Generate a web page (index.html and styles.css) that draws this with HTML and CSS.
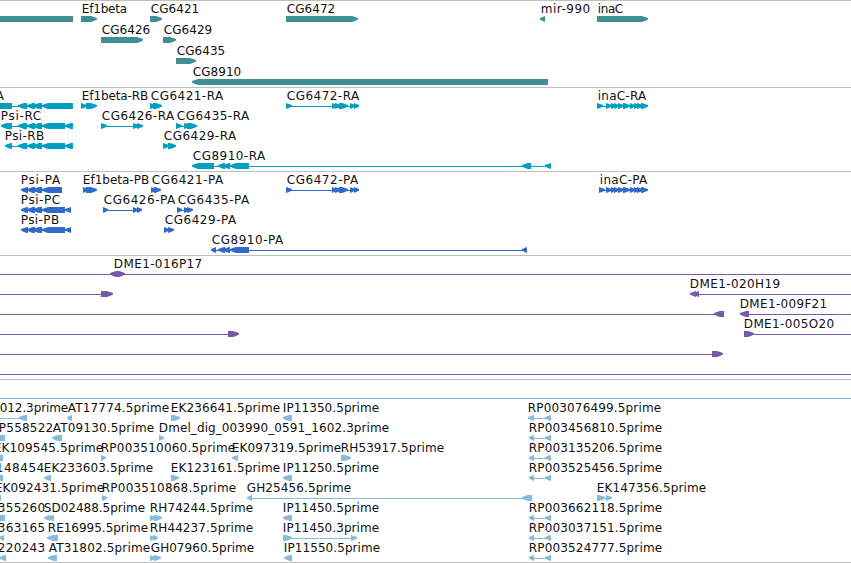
FILE: index.html
```html
<!DOCTYPE html>
<html lang="en">
<head>
    <meta charset="UTF-8">
    <meta name="viewport" content="width=device-width, initial-scale=1.0">
    <title>Genome browser</title>
    <link rel="stylesheet" href="styles.css">
</head>
<body>
    <main class="browser" id="browser"></main>
    <script src="tracks.js"></script>
</body>
</html>
```
FILE: styles.css
```css
body {
  margin: 0;
  background-color: #fff;
  overflow: hidden;
}

.browser {
  display: flex;
  flex-direction: column;
  height: 563px;
  box-sizing: border-box;
  border-bottom: 1px solid #bfbfbf;
}

.track {
  display: flex;
  flex-direction: column;
  flex-shrink: 0;
  box-sizing: border-box;
  border-top: 1px solid #bfbfbf;
  padding-bottom: 3px;
}

.row {
  display: block;
  width: 100%;
  height: 20px;
  flex-shrink: 0;
  overflow: visible;
}

.genes .row {
  height: 21px;
}

.genes {
  padding-bottom: 2px;
  color: #3f8f95;
}

.transcripts {
  color: #009fbf;
}

.proteins {
  color: #306acb;
}

.clones {
  color: #7759a8;
}

.ests {
  color: #87bbdd;
  padding-bottom: 2px;
}

.shape {
  fill: currentColor;
}

.label {
  font-family: "DejaVu Sans", sans-serif;
  font-size: 12px;
  fill: #111;
}
```
FILE: tracks.js
```js
// feature: [label, label start, label end, strand, spans, line start, line end]
const psi = [[18, 27], [27, 35], [33, 42], [42, 65], [65, 73]];
const psiProtein = [[21, 28], [27, 35], [33, 42], [42, 65], [65, 71]];
const cg6472 = [[286, 292], [332, 337], [335, 341], [339, 348], [350, 355], [354, 359]];
const inaC = [[606, 612], [611, 616], [614, 619], [618, 624], [623, 630], [630, 635], [634, 639], [637, 643], [641, 648]];
const rpPair = [[529, 534], [545, 551]];

const tracks = [
    { name: "genes", rows: [
        [["", 0, 0, "<", [[-10, 73]]],
         ["Ef1beta", 81, 127, ">", [[81, 97]]],
         ["CG6421", 150, 199, ">", [[150, 162]]],
         ["CG6472", 286, 335, ">", [[286, 358]]],
         ["mir-990", 540, 590, "<", [[540, 545]]],
         ["inaC", 597, 623, ">", [[597, 648]]]],
        [["CG6426", 101, 150, ">", [[101, 143]]],
         ["CG6429", 163, 212, ">", [[163, 176]]]],
        [["CG6435", 176, 225, ">", [[176, 196]]]],
        [["CG8910", 192, 241, "<", [[192, 548]]]]
    ] },
    { name: "transcripts", rows: [
        [["A", -5, 4, "<", [[-10, 12], [18, 27], [27, 35], [33, 42], [42, 73]]],
         ["Ef1beta-RB", 81, 148, ">", [[81, 87], [86, 97]]],
         ["CG6421-RA", 150, 223, ">", [[150, 156], [153, 162]]],
         ["CG6472-RA", 286, 359, ">", cg6472],
         ["inaC-RA", 597, 646, ">", [[597, 603], ...inaC]]],
        [["Psi-RC", 0, 41, "<", [[1, 12], ...psi]],
         ["CG6426-RA", 101, 174, ">", [[101, 107], [133, 139], [137, 143]]],
         ["CG6435-RA", 176, 249, ">", [[176, 182], [184, 190], [187, 197]]]],
        [["Psi-RB", 4, 44, "<", [[5, 12], ...psi]],
         ["CG6429-RA", 163, 236, ">", [[163, 169], [168, 176]]]],
        [["CG8910-RA", 192, 265, "<", [[192, 214], [218, 225], [223, 230], [230, 249], [522, 531], [545, 551]]]]
    ] },
    { name: "proteins", rows: [
        [["Psi-PA", 20, 60, "<", [[21, 28], [27, 35], [33, 42], [42, 62]]],
         ["Ef1beta-PB", 82, 149, ">", [[83, 88], [86, 97]]],
         ["CG6421-PA", 151, 223, ">", [[151, 156], [154, 161]]],
         ["CG6472-PA", 286, 358, ">", cg6472],
         ["inaC-PA", 599, 647, ">", [[599, 605], ...inaC]]],
        [["Psi-PC", 20, 60, "<", psiProtein],
         ["CG6426-PA", 103, 175, ">", [[103, 108], [133, 138], [137, 142]]],
         ["CG6435-PA", 177, 249, ">", [[177, 182], [184, 189], [187, 193]]]],
        [["Psi-PB", 20, 59, "<", psiProtein],
         ["CG6429-PA", 164, 236, ">", [[164, 169], [168, 174]]]],
        [["CG8910-PA", 211, 283, "<", [[211, 216], [218, 225], [223, 230], [230, 249], [522, 527]]]]
    ] },
    { name: "clones", rows: [
        [["DME1-016P17", 113, 202, "<", [[110, 117]], 0, 851],
         ["", 0, 0, ">", [[116, 125]]]],
        [["", 0, 0, ">", [[101, 113]], 0, 101],
         ["DME1-020H19", 689, 780, "<", [[690, 696], [693, 699]], 693, 851]],
        [["", 0, 0, "<", [[714, 724]], 0, 720],
         ["DME1-009F21", 739, 827, "<", [[740, 749]], 742, 851]],
        [["", 0, 0, ">", [[228, 239]], 0, 230],
         ["DME1-005O20", 743, 834, ">", [[744, 754]], 744, 851]],
        [["", 0, 0, ">", [[712, 723]], 0, 715]],
        [["", 0, 0, ">", [], 0, 851]]
    ] },
    { name: "ests", rows: [
        [["", 0, 0, ">", [], 0, 851]],
        [["012.3prime", -1, 68, "<", [[19, 27]], 0, 20],
         ["AT17774.5prime", 67, 169, "<", [[67, 72]]],
         ["EK236641.5prime", 170, 280, ">", [[171, 180]]],
         ["IP11350.5prime", 282, 379, "<", [[283, 292]]],
         ["RP003076499.5prime", 527, 661, "<", [[528, 534], [545, 551]]]],
        [["P558522", -2, 53, "<", [[-8, 5]]],
         ["AT09130.5prime", 52, 154, "<", [[52, 62]]],
         ["Dmel_dig_003990_0591_1602.3prime", 158, 389, ">", [[159, 164]]],
         ["RP003456810.5prime", 528, 662, "<", rpPair]],
        [["EK109545.5prime", -7, 103, "<", [[-8, 3]]],
         ["RP003510060.5prime", 100, 235, ">", [[101, 106]]],
         ["EK097319.5prime", 231, 341, "<", [[232, 238]]],
         ["RH53917.5prime", 340, 444, ">", [[341, 351]]],
         ["RP003135206.5prime", 528, 662, "<", rpPair]],
        [["148454", -5, 44, "<", [[-8, 3]]],
         ["EK233603.5prime", 43, 153, "<", [[44, 51]]],
         ["EK123161.5prime", 170, 280, ">", [[171, 179]]],
         ["IP11250.5prime", 282, 379, "<", [[283, 292]]],
         ["RP003525456.5prime", 528, 662, "<", rpPair]],
        [["EK092431.5prime", -6, 104, "<", [[-8, 1]]],
         ["RP003510868.5prime", 101, 236, ">", [[102, 107]]],
         ["GH25456.5prime", 246, 351, "<", [[247, 252], [522, 532]]],
         ["EK147356.5prime", 596, 706, ">", [[597, 605], [606, 612]]]],
        [["355260", -3, 45, "<", [[-8, 5]]],
         ["SD02488.5prime", 43, 145, "<", [[44, 50], [47, 54]]],
         ["RH74244.5prime", 149, 253, ">", [[150, 156], [154, 162]]],
         ["IP11450.5prime", 282, 379, "<", [[283, 292]]],
         ["RP003662118.5prime", 528, 662, "<", rpPair]],
        [["363165", -3, 45, "<", [[-1, 4]]],
         ["RE16995.5prime", 47, 148, "<", [[47, 58]]],
         ["RH44237.5prime", 149, 253, ">", [[150, 154], [153, 158]]],
         ["IP11450.3prime", 282, 379, ">", [[283, 292], [351, 357]]],
         ["RP003037151.5prime", 528, 662, "<", rpPair]],
        [["220243", -3, 45, "<", [[-1, 6]]],
         ["AT31802.5prime", 48, 150, "<", [[48, 57]]],
         ["GH07960.5prime", 150, 254, ">", [[150, 156], [154, 161]]],
         ["IP11550.5prime", 283, 380, "<", [[284, 292]]],
         ["RP003524777.5prime", 528, 662, "<", rpPair]]
    ] }
];

const SVG = "http://www.w3.org/2000/svg";

function add(parent, tag, attrs) {
    const node = document.createElementNS(SVG, tag);
    for (const key in attrs) node.setAttribute(key, attrs[key]);
    parent.appendChild(node);
    return node;
}

// block with a pointed end on the strand side
function drawSpan(svg, x1, x2, strand) {
    const head = Math.min(6, x2 - x1);
    const tip = strand === ">" ? x2 : x1;
    const back = strand === ">" ? x1 : x2;
    const dir = strand === ">" ? -1 : 1;
    const neck = tip + dir * head;
    const mid = tip + dir * head / 2;
    add(svg, "polygon", {
        class: "shape",
        points: `${back},15 ${neck},15 ${mid},16 ${tip},17 ${tip},18.5 ${mid},20 ${neck},21 ${back},21`
    });
}

function drawFeature(svg, [label, start, end, strand, spans, from, to]) {
    if (from === undefined) {
        from = spans[0][0] + 2;
        to = spans[spans.length - 1][1] - 2;
    }
    add(svg, "rect", { class: "shape", x: from, y: 18, width: to - from, height: 1 });
    spans.forEach(([x1, x2]) => drawSpan(svg, x1, x2, strand));
    if (label) {
        const text = add(svg, "text", { class: "label", x: start + 0.8, y: 12, textLength: end - start - 0.6 });
        text.textContent = label;
    }
}

tracks.forEach(track => {
    const section = document.createElement("section");
    section.className = "track " + track.name;
    track.rows.forEach(row => {
        const svg = add(section, "svg", { class: "row" });
        row.forEach(feature => drawFeature(svg, feature));
    });
    document.getElementById("browser").appendChild(section);
});
```
